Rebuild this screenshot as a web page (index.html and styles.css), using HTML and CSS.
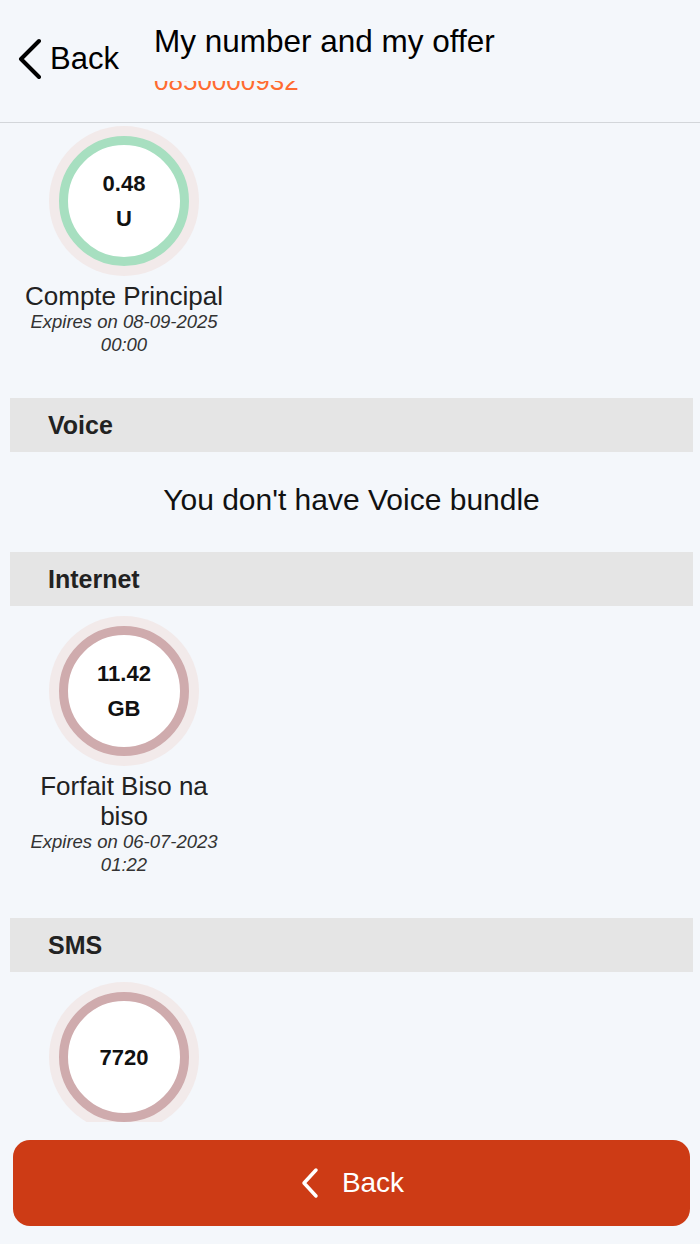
FILE: index.html
```html
<!DOCTYPE html>
<html>
<head>
  <meta charset="UTF-8">
  <title>My number and my offer</title>
  <link rel="stylesheet" href="styles.css">
</head>
<body>
  <header class="topbar">
    <a class="back-link" href="#">
      <svg class="back-chevron" width="24" height="42" viewBox="0 0 24 42">
        <path d="M22 3 L4 21 L22 39" fill="none" stroke="#000" stroke-width="4" stroke-linecap="round" stroke-linejoin="round"/>
      </svg>
      <span>Back</span>
    </a>
    <div class="title-block">
      <div class="title">My number and my offer</div>
      <div class="number-clip"><div class="number">0850000932</div></div>
    </div>
  </header>

  <main class="content">
    <div class="bundle-list first">
      <div class="bundle">
        <div class="gauge"><div class="gauge-ring green"><span>0.48</span><span>U</span></div></div>
        <div class="bundle-name">Compte Principal</div>
        <div class="bundle-expiry">Expires on 08-09-2025 00:00</div>
      </div>
    </div>

    <div class="section-head">Voice</div>
    <div class="empty-msg">You don't have Voice bundle</div>

    <div class="section-head">Internet</div>
    <div class="bundle-list">
      <div class="bundle">
        <div class="gauge"><div class="gauge-ring rose"><span>11.42</span><span>GB</span></div></div>
        <div class="bundle-name">Forfait Biso na biso</div>
        <div class="bundle-expiry">Expires on 06-07-2023 01:22</div>
      </div>
    </div>

    <div class="section-head">SMS</div>
    <div class="bundle-list">
      <div class="bundle">
        <div class="gauge"><div class="gauge-ring rose"><span>7720</span></div></div>
        <div class="bundle-name">SMS</div>
      </div>
    </div>
  </main>

  <footer class="footer">
    <a class="back-button" href="#">
      <svg width="20" height="32" viewBox="0 0 20 32">
        <path d="M17 3 L5 16 L17 29" fill="none" stroke="#fff" stroke-width="3.5" stroke-linecap="round" stroke-linejoin="round"/>
      </svg>
      <span>Back</span>
    </a>
  </footer>
</body>
</html>
```

FILE: styles.css
```css
body {
  margin: 0;
  height: 1244px;
  display: flex;
  flex-direction: column;
  background: #f4f7fb;
  font-family: "Liberation Sans", Arial, sans-serif;
  color: #111;
  overflow: hidden;
}

.topbar {
  height: 122px;
  flex-shrink: 0;
  display: flex;
  align-items: flex-start;
  border-bottom: 1px solid #d3d6da;
}

.back-link {
  width: 154px;
  box-sizing: border-box;
  padding-left: 17px;
  margin-top: 41px;
  height: 36px;
  display: flex;
  align-items: center;
  gap: 9px;
  font-size: 31px;
  line-height: 36px;
  color: #000;
  text-decoration: none;
}

.title-block {
  padding-top: 23px;
}

.title {
  font-size: 31.5px;
  line-height: 36px;
  color: #000;
}

/* the phone number sits half hidden under the title bar */
.number-clip {
  margin-top: 22px;
  height: 10px;
  overflow: hidden;
}

.number {
  margin-top: -13px;
  font-size: 26px;
  line-height: 26px;
  color: #ff6b30;
}

.content {
  flex: 1;
  overflow: hidden;
  padding: 3px 7px 0 10px;
}

.bundle-list {
  display: flex;
  flex-wrap: wrap;
  padding-top: 10px;
}

.bundle-list.first {
  padding-top: 0;
}

.bundle {
  width: 228px;
  display: flex;
  flex-direction: column;
  align-items: center;
  text-align: center;
  margin-bottom: 42px;
}

.gauge {
  width: 150px;
  height: 150px;
  border-radius: 50%;
  background: #f2eaea;
  display: flex;
  align-items: center;
  justify-content: center;
}

.gauge-ring {
  width: 130px;
  height: 130px;
  box-sizing: border-box;
  border: 9px solid #cfabad;
  border-radius: 50%;
  background: #fff;
  display: flex;
  flex-direction: column;
  align-items: center;
  justify-content: center;
  font-weight: bold;
  font-size: 22px;
  line-height: 35px;
  color: #111;
}

.gauge-ring.green {
  border-color: #a7dfc0;
}

.gauge-ring.rose {
  border-color: #cfabad;
}

.bundle-name {
  width: 212px;
  margin-top: 5px;
  font-size: 26px;
  line-height: 30px;
  color: #222;
}

.bundle-expiry {
  width: 212px;
  font-style: italic;
  font-size: 18.5px;
  line-height: 22.5px;
  color: #333;
}

.section-head {
  height: 54px;
  padding-left: 38px;
  background: #e5e5e5;
  font-weight: bold;
  font-size: 25px;
  line-height: 54px;
  color: #222;
}

.empty-msg {
  padding: 31px 0 35px;
  text-align: center;
  font-size: 30px;
  line-height: 34px;
  color: #111;
}

.footer {
  flex-shrink: 0;
  padding: 18px 10px 18px 13px;
}

.back-button {
  height: 86px;
  border-radius: 17px;
  background: #cd3b15;
  display: flex;
  align-items: center;
  justify-content: center;
  gap: 23px;
  color: #fff;
  font-size: 28px;
  text-decoration: none;
}
```
